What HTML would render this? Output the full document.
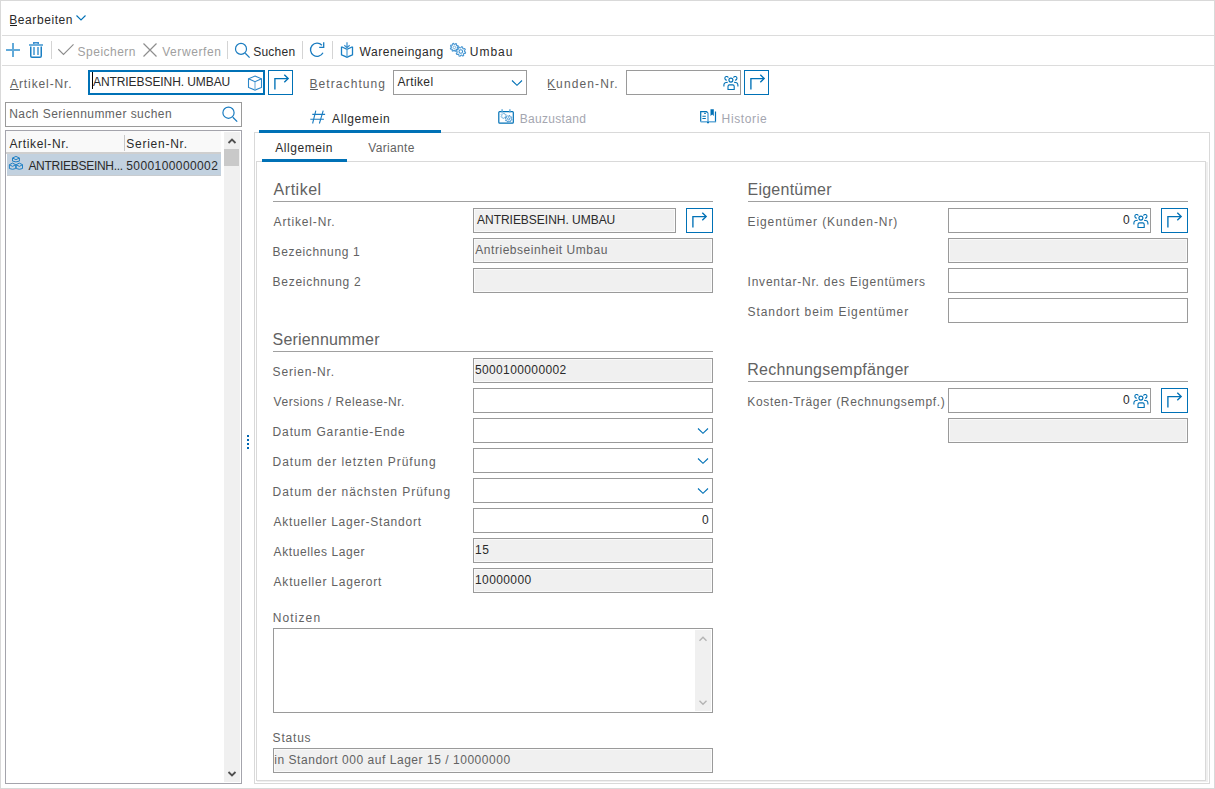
<!DOCTYPE html>
<html><head><meta charset="utf-8"><style>
html,body{margin:0;padding:0;background:#fff;width:1215px;height:789px;overflow:hidden;position:relative}
.t{position:absolute;white-space:nowrap;font-family:"Liberation Sans",sans-serif;}
u{text-decoration:underline;text-underline-offset:2px;text-decoration-thickness:1px}
svg{overflow:visible}
</style></head><body>
<div style="position:absolute;left:0px;top:0px;width:1215px;height:789px;box-sizing:border-box;border:1px solid #d9d9d9"></div>
<div style="position:absolute;left:10px;top:25px;width:7px;height:1px;box-sizing:border-box;background:#1e1e1e"></div>
<div style="position:absolute;left:10px;top:89px;width:9px;height:1px;box-sizing:border-box;background:#5e5e5e"></div>
<div style="position:absolute;left:310px;top:89px;width:8px;height:1px;box-sizing:border-box;background:#5e5e5e"></div>
<div style="position:absolute;left:548px;top:89px;width:8px;height:1px;box-sizing:border-box;background:#5e5e5e"></div>
<div style="position:absolute;left:2px;top:35px;width:1212px;height:1px;box-sizing:border-box;background:#dcdcdc"></div>
<div style="position:absolute;left:2px;top:65px;width:1212px;height:1px;box-sizing:border-box;background:#dcdcdc"></div>
<div style="position:absolute;left:51px;top:41px;width:1px;height:18px;box-sizing:border-box;background:#d4d4d4"></div>
<div style="position:absolute;left:227px;top:41px;width:1px;height:18px;box-sizing:border-box;background:#d4d4d4"></div>
<div style="position:absolute;left:302px;top:41px;width:1px;height:18px;box-sizing:border-box;background:#d4d4d4"></div>
<div style="position:absolute;left:332px;top:41px;width:1px;height:18px;box-sizing:border-box;background:#d4d4d4"></div>
<div style="position:absolute;left:88px;top:70px;width:177px;height:25px;box-sizing:border-box;border:2px solid #0071b6;background:#fff"></div>
<div style="position:absolute;left:92px;top:72px;width:1px;height:17px;box-sizing:border-box;background:#000"></div>
<div style="position:absolute;left:268px;top:70px;width:25px;height:25px;box-sizing:border-box;border:1px solid #0071b6"></div>
<div style="position:absolute;left:393px;top:70px;width:134px;height:25px;box-sizing:border-box;border:1px solid #9a9a9a"></div>
<div style="position:absolute;left:626px;top:70px;width:115px;height:25px;box-sizing:border-box;border:1px solid #9a9a9a"></div>
<div style="position:absolute;left:744px;top:70px;width:25px;height:25px;box-sizing:border-box;border:1px solid #0071b6"></div>
<div style="position:absolute;left:5px;top:102px;width:237px;height:25px;box-sizing:border-box;border:1px solid #9a9a9a"></div>
<div style="position:absolute;left:5px;top:130px;width:237px;height:654px;box-sizing:border-box;border:1px solid #a4a4ac"></div>
<div style="position:absolute;left:6px;top:131px;width:215px;height:21px;box-sizing:border-box;background:#f9f9f9"></div>
<div style="position:absolute;left:124px;top:135px;width:1px;height:16px;box-sizing:border-box;background:#c8c8c8"></div>
<div style="position:absolute;left:6px;top:152px;width:215px;height:2px;box-sizing:border-box;background:#cfcfcf"></div>
<div style="position:absolute;left:7px;top:154px;width:214px;height:21px;box-sizing:border-box;background:#c2d1df"></div>
<div style="position:absolute;left:7px;top:175px;width:214px;height:1px;box-sizing:border-box;background:#c8ccd0"></div>
<div style="position:absolute;left:224px;top:132px;width:16px;height:650px;box-sizing:border-box;background:#f0f0f0"></div>
<div style="position:absolute;left:224px;top:149px;width:15px;height:17px;box-sizing:border-box;background:#c9c9c9"></div>
<div style="position:absolute;left:247px;top:435px;width:2px;height:2px;box-sizing:border-box;background:#0066b3"></div>
<div style="position:absolute;left:247px;top:439px;width:2px;height:2px;box-sizing:border-box;background:#0066b3"></div>
<div style="position:absolute;left:247px;top:443px;width:2px;height:2px;box-sizing:border-box;background:#0066b3"></div>
<div style="position:absolute;left:247px;top:447px;width:2px;height:2px;box-sizing:border-box;background:#0066b3"></div>
<div style="position:absolute;left:254px;top:132px;width:956px;height:652px;box-sizing:border-box;border:1px solid #d9d9d9"></div>
<div style="position:absolute;left:259px;top:130px;width:182px;height:3px;box-sizing:border-box;background:#0071b6"></div>
<div style="position:absolute;left:256px;top:161px;width:950px;height:620px;box-sizing:border-box;border:1px solid #d9d9d9;background:#fff"></div>
<div style="position:absolute;left:1206px;top:162px;width:2px;height:620px;box-sizing:border-box;background:#efefef"></div>
<div style="position:absolute;left:257px;top:781px;width:951px;height:1px;box-sizing:border-box;background:#efefef"></div>
<div style="position:absolute;left:262px;top:159px;width:85px;height:3px;box-sizing:border-box;background:#0071b6"></div>
<div style="position:absolute;left:273px;top:201px;width:440px;height:1px;box-sizing:border-box;background:#a0a0a0"></div>
<div style="position:absolute;left:273px;top:351px;width:440px;height:1px;box-sizing:border-box;background:#a0a0a0"></div>
<div style="position:absolute;left:748px;top:201px;width:440px;height:1px;box-sizing:border-box;background:#a0a0a0"></div>
<div style="position:absolute;left:748px;top:381px;width:440px;height:1px;box-sizing:border-box;background:#a0a0a0"></div>
<div style="position:absolute;left:473px;top:208px;width:203px;height:25px;box-sizing:border-box;border:1px solid #9a9a9a;background:#f0f0f0;box-shadow:inset 0 0 0 1px #fafafa"></div>
<div style="position:absolute;left:686px;top:208px;width:27px;height:25px;box-sizing:border-box;border:1px solid #0071b6"></div>
<div style="position:absolute;left:473px;top:238px;width:240px;height:25px;box-sizing:border-box;border:1px solid #9a9a9a;background:#f0f0f0;box-shadow:inset 0 0 0 1px #fafafa"></div>
<div style="position:absolute;left:473px;top:268px;width:240px;height:25px;box-sizing:border-box;border:1px solid #9a9a9a;background:#f0f0f0;box-shadow:inset 0 0 0 1px #fafafa"></div>
<div style="position:absolute;left:473px;top:358px;width:240px;height:25px;box-sizing:border-box;border:1px solid #9a9a9a;background:#f0f0f0;box-shadow:inset 0 0 0 1px #fafafa"></div>
<div style="position:absolute;left:473px;top:388px;width:240px;height:25px;box-sizing:border-box;border:1px solid #9a9a9a;background:#fff"></div>
<div style="position:absolute;left:473px;top:418px;width:240px;height:25px;box-sizing:border-box;border:1px solid #9a9a9a;background:#fff"></div>
<div style="position:absolute;left:473px;top:448px;width:240px;height:25px;box-sizing:border-box;border:1px solid #9a9a9a;background:#fff"></div>
<div style="position:absolute;left:473px;top:478px;width:240px;height:25px;box-sizing:border-box;border:1px solid #9a9a9a;background:#fff"></div>
<div style="position:absolute;left:473px;top:508px;width:240px;height:25px;box-sizing:border-box;border:1px solid #9a9a9a;background:#fff"></div>
<div style="position:absolute;left:473px;top:538px;width:240px;height:25px;box-sizing:border-box;border:1px solid #9a9a9a;background:#f0f0f0;box-shadow:inset 0 0 0 1px #fafafa"></div>
<div style="position:absolute;left:473px;top:568px;width:240px;height:25px;box-sizing:border-box;border:1px solid #9a9a9a;background:#f0f0f0;box-shadow:inset 0 0 0 1px #fafafa"></div>
<div style="position:absolute;left:273px;top:628px;width:440px;height:85px;box-sizing:border-box;border:1px solid #9a9a9a"></div>
<div style="position:absolute;left:695px;top:630px;width:16px;height:81px;box-sizing:border-box;background:#f0f0f0"></div>
<div style="position:absolute;left:273px;top:748px;width:440px;height:25px;box-sizing:border-box;border:1px solid #9a9a9a;background:#f0f0f0;box-shadow:inset 0 0 0 1px #fafafa"></div>
<div style="position:absolute;left:948px;top:208px;width:203px;height:25px;box-sizing:border-box;border:1px solid #9a9a9a;background:#fff"></div>
<div style="position:absolute;left:1161px;top:208px;width:27px;height:25px;box-sizing:border-box;border:1px solid #0071b6"></div>
<div style="position:absolute;left:948px;top:238px;width:240px;height:25px;box-sizing:border-box;border:1px solid #9a9a9a;background:#f0f0f0;box-shadow:inset 0 0 0 1px #fafafa"></div>
<div style="position:absolute;left:948px;top:268px;width:240px;height:25px;box-sizing:border-box;border:1px solid #9a9a9a;background:#fff"></div>
<div style="position:absolute;left:948px;top:298px;width:240px;height:25px;box-sizing:border-box;border:1px solid #9a9a9a;background:#fff"></div>
<div style="position:absolute;left:948px;top:388px;width:203px;height:25px;box-sizing:border-box;border:1px solid #9a9a9a;background:#fff"></div>
<div style="position:absolute;left:1161px;top:388px;width:27px;height:25px;box-sizing:border-box;border:1px solid #0071b6"></div>
<div style="position:absolute;left:948px;top:418px;width:240px;height:25px;box-sizing:border-box;border:1px solid #9a9a9a;background:#f0f0f0;box-shadow:inset 0 0 0 1px #fafafa"></div>
<svg style="position:absolute;left:74px;top:12px" width="14" height="10" viewBox="0 0 14 10" fill="none"><path d="M2.5 3.5 L7 8 L11.5 3.5" stroke="#0071b6" stroke-width="1.1"/></svg>
<svg style="position:absolute;left:0px;top:40px" width="25" height="20" viewBox="0 0 25 20" fill="none"><path d="M12.999 3 V17 M6 10 H20" stroke="#62aad9" stroke-width="2"/></svg>
<svg style="position:absolute;left:27px;top:40px" width="18" height="20" viewBox="0 0 18 20" fill="none"><path d="M2 5 H16" stroke="#6fb0dc" stroke-width="2"/><path d="M6.75 4 V2.75 H11.25 V4" stroke="#3b8fcf" stroke-width="1.5"/><path d="M3.75 6.5 V16 Q3.75 17.25 5 17.25 H13 Q14.25 17.25 14.25 16 V6.5" stroke="#1a7fc3" stroke-width="1.5"/><path d="M7 7 V15 M11 7 V15" stroke="#6fb0dc" stroke-width="2"/></svg>
<svg style="position:absolute;left:56px;top:42px" width="20" height="16" viewBox="0 0 20 16" fill="none"><path d="M2.3 7.25 L7.5 12.4 L17.5 2.3" stroke="#8c8c8c" stroke-width="1.1"/></svg>
<svg style="position:absolute;left:141px;top:41px" width="18" height="18" viewBox="0 0 18 18" fill="none"><path d="M2.5 2.5 L15.5 15.5 M15.5 2.5 L2.5 15.5" stroke="#8e8e8e" stroke-width="1.2"/></svg>
<svg style="position:absolute;left:232px;top:40px" width="22" height="20" viewBox="0 0 22 20" fill="none"><circle cx="9" cy="8.9" r="5.5" stroke="#1a7cc0" stroke-width="1.2"/><path d="M13.3 13.3 L17.6 17.6" stroke="#1a7cc0" stroke-width="1.3"/></svg>
<svg style="position:absolute;left:306px;top:40px" width="22" height="20" viewBox="0 0 22 20" fill="none"><path d="M16.98 12.79 A6.6 6.6 0 1 1 15.9 5.2" stroke="#1a7cc0" stroke-width="1.3"/><path d="M17.7 2.3 V7.3 H13.2" stroke="#1a7cc0" stroke-width="1.3"/></svg>
<svg style="position:absolute;left:338px;top:40px" width="20" height="20" viewBox="0 0 20 20" fill="none"><path d="M9 2.3 V7.3 M6.3 5.3 L9 7.6 L11.7 5.3" stroke="#3b90cf" stroke-width="1.2"/><path d="M3.5 6.8 V14.8 L9 17.2 L14.5 14.8 V6.8" stroke="#1a7fc3" stroke-width="1.3"/><path d="M3.5 6.8 L9 9.4 L14.5 6.8" stroke="#1a7fc3" stroke-width="1.2"/><path d="M9 9.4 V17" stroke="#5aa5d8" stroke-width="1.3"/></svg>
<svg style="position:absolute;left:447px;top:40px" width="22" height="20" viewBox="0 0 22 20" fill="none"><path d="M10.29 7.95 L11.21 8.72 L10.75 9.64 L9.58 9.36 L9.01 9.85 L9.11 11.05 L8.14 11.37 L7.50 10.35 L6.75 10.29 L5.98 11.21 L5.06 10.75 L5.34 9.58 L4.85 9.01 L3.65 9.11 L3.33 8.14 L4.35 7.50 L4.41 6.75 L3.49 5.98 L3.95 5.06 L5.12 5.34 L5.69 4.85 L5.59 3.65 L6.56 3.33 L7.20 4.35 L7.95 4.41 L8.72 3.49 L9.64 3.95 L9.36 5.12 L9.85 5.69 L11.05 5.59 L11.37 6.56 L10.35 7.20 Z" stroke="#4796d2" stroke-width="1.05" stroke-linejoin="round"/><circle cx="7.35" cy="7.35" r="1.3" stroke="#7ab6e0" stroke-width="1"/><path d="M17.50 11.50 L18.65 12.19 L18.33 13.38 L16.98 13.38 L16.42 14.12 L16.74 15.42 L15.68 16.03 L14.72 15.08 L13.80 15.20 L13.11 16.35 L11.92 16.03 L11.92 14.68 L11.18 14.12 L9.88 14.44 L9.27 13.38 L10.22 12.42 L10.10 11.50 L8.95 10.81 L9.27 9.62 L10.62 9.62 L11.18 8.88 L10.86 7.58 L11.92 6.97 L12.88 7.92 L13.80 7.80 L14.49 6.65 L15.68 6.97 L15.68 8.32 L16.42 8.88 L17.72 8.56 L18.33 9.62 L17.38 10.58 Z" stroke="#4796d2" stroke-width="1.05" stroke-linejoin="round"/><circle cx="13.8" cy="11.5" r="1.8" stroke="#3b90cf" stroke-width="1.1"/></svg>
<svg style="position:absolute;left:248px;top:75px" width="16" height="18" viewBox="0 0 16 18" fill="none"><path d="M7 1.1 L13.5 3.8 V12.4 L7 15.1 L0.5 12.4 V3.8 Z" stroke="#2a86c8" stroke-width="1.1"/><path d="M0.5 3.8 L7 6.7 L13.5 3.8" stroke="#2a86c8" stroke-width="1.1"/><path d="M7 6.7 V15" stroke="#7ab6e0" stroke-width="1.2"/></svg>
<svg style="position:absolute;left:268px;top:70px" width="25" height="25" viewBox="0 0 25 25" fill="none"><path d="M6.9 19.5 V8.6 H20" stroke="#0071b6" stroke-width="1.35"/><path d="M16.3 4.7 L20.2 8.6 L16.3 12.3" stroke="#0071b6" stroke-width="1.35"/></svg>
<svg style="position:absolute;left:744px;top:70px" width="25" height="25" viewBox="0 0 25 25" fill="none"><path d="M6.9 19.5 V8.6 H20" stroke="#0071b6" stroke-width="1.35"/><path d="M16.3 4.7 L20.2 8.6 L16.3 12.3" stroke="#0071b6" stroke-width="1.35"/></svg>
<svg style="position:absolute;left:686px;top:208px" width="25" height="25" viewBox="0 0 25 25" fill="none"><path d="M6.9 19.5 V8.6 H20" stroke="#0071b6" stroke-width="1.35"/><path d="M16.3 4.7 L20.2 8.6 L16.3 12.3" stroke="#0071b6" stroke-width="1.35"/></svg>
<svg style="position:absolute;left:1161px;top:208px" width="25" height="25" viewBox="0 0 25 25" fill="none"><path d="M6.9 19.5 V8.6 H20" stroke="#0071b6" stroke-width="1.35"/><path d="M16.3 4.7 L20.2 8.6 L16.3 12.3" stroke="#0071b6" stroke-width="1.35"/></svg>
<svg style="position:absolute;left:1161px;top:388px" width="25" height="25" viewBox="0 0 25 25" fill="none"><path d="M6.9 19.5 V8.6 H20" stroke="#0071b6" stroke-width="1.35"/><path d="M16.3 4.7 L20.2 8.6 L16.3 12.3" stroke="#0071b6" stroke-width="1.35"/></svg>
<svg style="position:absolute;left:722px;top:74px" width="18" height="18" viewBox="0 0 18 18" fill="none"><circle cx="8.9" cy="6.1" r="2" stroke="#0071b6" stroke-width="1.1"/><path d="M6 15.5 V12.4 Q6 10.9 7.5 10.9 H10.7 Q12.2 10.9 12.2 12.4 V15.5 Z" stroke="#0071b6" stroke-width="1.1"/><path d="M6.3 3.6 A1.8 1.8 0 1 0 4.8 6.1 M11.5 3.6 A1.8 1.8 0 1 1 13.0 6.1" stroke="#0071b6" stroke-width="1.1"/><path d="M5.8 8.2 Q1.9 8.2 1.9 11 V12.4 M12 8.2 Q15.9 8.2 15.9 11 V12.4" stroke="#0071b6" stroke-width="1.1"/></svg>
<svg style="position:absolute;left:1132px;top:212px" width="18" height="18" viewBox="0 0 18 18" fill="none"><circle cx="8.9" cy="6.1" r="2" stroke="#0071b6" stroke-width="1.1"/><path d="M6 15.5 V12.4 Q6 10.9 7.5 10.9 H10.7 Q12.2 10.9 12.2 12.4 V15.5 Z" stroke="#0071b6" stroke-width="1.1"/><path d="M6.3 3.6 A1.8 1.8 0 1 0 4.8 6.1 M11.5 3.6 A1.8 1.8 0 1 1 13.0 6.1" stroke="#0071b6" stroke-width="1.1"/><path d="M5.8 8.2 Q1.9 8.2 1.9 11 V12.4 M12 8.2 Q15.9 8.2 15.9 11 V12.4" stroke="#0071b6" stroke-width="1.1"/></svg>
<svg style="position:absolute;left:1132px;top:392px" width="18" height="18" viewBox="0 0 18 18" fill="none"><circle cx="8.9" cy="6.1" r="2" stroke="#0071b6" stroke-width="1.1"/><path d="M6 15.5 V12.4 Q6 10.9 7.5 10.9 H10.7 Q12.2 10.9 12.2 12.4 V15.5 Z" stroke="#0071b6" stroke-width="1.1"/><path d="M6.3 3.6 A1.8 1.8 0 1 0 4.8 6.1 M11.5 3.6 A1.8 1.8 0 1 1 13.0 6.1" stroke="#0071b6" stroke-width="1.1"/><path d="M5.8 8.2 Q1.9 8.2 1.9 11 V12.4 M12 8.2 Q15.9 8.2 15.9 11 V12.4" stroke="#0071b6" stroke-width="1.1"/></svg>
<svg style="position:absolute;left:511px;top:79px" width="12" height="8" viewBox="0 0 12 8" fill="none"><path d="M1 1.5 L6 6.3 L11 1.5" stroke="#0071b6" stroke-width="1.1"/></svg>
<svg style="position:absolute;left:697px;top:427px" width="12" height="8" viewBox="0 0 12 8" fill="none"><path d="M1 1.5 L6 6.3 L11 1.5" stroke="#0071b6" stroke-width="1.1"/></svg>
<svg style="position:absolute;left:697px;top:457px" width="12" height="8" viewBox="0 0 12 8" fill="none"><path d="M1 1.5 L6 6.3 L11 1.5" stroke="#0071b6" stroke-width="1.1"/></svg>
<svg style="position:absolute;left:697px;top:487px" width="12" height="8" viewBox="0 0 12 8" fill="none"><path d="M1 1.5 L6 6.3 L11 1.5" stroke="#0071b6" stroke-width="1.1"/></svg>
<svg style="position:absolute;left:219px;top:104px" width="22" height="20" viewBox="0 0 22 20" fill="none"><circle cx="9.5" cy="8.7" r="5.6" stroke="#1a7cc0" stroke-width="1.2"/><path d="M13.8 13.2 L18.2 17.6" stroke="#1a7cc0" stroke-width="1.3"/></svg>
<svg style="position:absolute;left:6px;top:152px" width="22" height="22" viewBox="0 0 22 22" fill="none"><path d="M6.50 6.00 L9.95 4.40 L13.40 6.00 V9.10 L9.95 9.90 L6.50 9.10 Z M6.50 6.00 L9.95 7.70 L13.40 6.00" stroke="#1f80c4" stroke-width="1.0" stroke-linejoin="round"/><path d="M3.40 12.70 L6.55 11.10 L9.70 12.70 V16.50 L6.55 17.30 L3.40 16.50 Z M3.40 12.70 L6.55 14.40 L9.70 12.70 M10.20 12.70 L13.35 11.10 L16.50 12.70 V16.50 L13.35 17.30 L10.20 16.50 Z M10.20 12.70 L13.35 14.40 L16.50 12.70" stroke="#1f80c4" stroke-width="1.0" stroke-linejoin="round"/></svg>
<svg style="position:absolute;left:224px;top:134px" width="16" height="14" viewBox="0 0 16 14" fill="none"><path d="M4.5 9 L8 5.5 L11.5 9" stroke="#505050" stroke-width="1.8"/></svg>
<svg style="position:absolute;left:224px;top:767px" width="16" height="14" viewBox="0 0 16 14" fill="none"><path d="M4.5 5 L8 8.5 L11.5 5" stroke="#505050" stroke-width="1.8"/></svg>
<svg style="position:absolute;left:695px;top:632px" width="16" height="14" viewBox="0 0 16 14" fill="none"><path d="M4.5 8.8 L8 5.3 L11.5 8.8" stroke="#b4b4b4" stroke-width="1.4"/></svg>
<svg style="position:absolute;left:695px;top:696px" width="16" height="14" viewBox="0 0 16 14" fill="none"><path d="M4.5 4.7 L8 8.2 L11.5 4.7" stroke="#b4b4b4" stroke-width="1.4"/></svg>
<svg style="position:absolute;left:309px;top:108px" width="20" height="18" viewBox="0 0 20 18" fill="none"><path d="M6.8 2.7 L3.6 15.5 M14.2 2.7 L10.4 15.5 M3.3 6.4 H16.1 M1.3 11.3 H14.9" stroke="#1a7cc0" stroke-width="1.1"/></svg>
<svg style="position:absolute;left:496px;top:107px" width="20" height="19" viewBox="0 0 20 19" fill="none"><rect x="2.8" y="4.7" width="14.5" height="11.4" rx="0.9" stroke="#0071b6" stroke-width="1.2"/><path d="M6.1 2.2 V5.5 M13.9 2.2 V5.5" stroke="#5aa5d8" stroke-width="1.4"/><path d="M9.42 9.36 L9.98 10.07 L9.43 10.78 L8.61 10.41 L8.02 10.65 L7.69 11.50 L6.80 11.38 L6.71 10.48 L6.21 10.09 L5.31 10.23 L4.97 9.40 L5.70 8.87 L5.78 8.24 L5.22 7.53 L5.77 6.82 L6.59 7.19 L7.18 6.95 L7.51 6.10 L8.40 6.22 L8.49 7.12 L8.99 7.51 L9.89 7.37 L10.23 8.20 L9.50 8.73 Z" stroke="#7ab6e0" stroke-width="1" stroke-linejoin="round"/><path d="M15.10 11.80 L15.97 12.28 L15.74 13.10 L14.75 13.07 L14.37 13.57 L14.64 14.52 L13.90 14.94 L13.22 14.22 L12.60 14.30 L12.12 15.17 L11.30 14.94 L11.33 13.95 L10.83 13.57 L9.88 13.84 L9.46 13.10 L10.18 12.42 L10.10 11.80 L9.23 11.32 L9.46 10.50 L10.45 10.53 L10.83 10.03 L10.56 9.08 L11.30 8.66 L11.98 9.38 L12.60 9.30 L13.08 8.43 L13.90 8.66 L13.87 9.65 L14.37 10.03 L15.32 9.76 L15.74 10.50 L15.02 11.18 Z" stroke="#4796d2" stroke-width="1" stroke-linejoin="round"/><circle cx="12.6" cy="11.8" r="1.1" stroke="#4796d2" stroke-width="0.9"/></svg>
<svg style="position:absolute;left:696px;top:105px" width="24" height="22" viewBox="0 0 24 22" fill="none"><path d="M4.7 16.6 V6.7 H10.4 L11.9 7.8" stroke="#0071b6" stroke-width="1.2"/><path d="M12 7.8 V16.6" stroke="#6fb0dc" stroke-width="1.6"/><path d="M4.7 16.6 H19.5 V6.5" stroke="#0071b6" stroke-width="1.2"/><path d="M4.7 16.6 H19.5" stroke="#6fb0dc" stroke-width="1.2"/><path d="M14.5 4.2 H17.8 V11 L16.15 9.6 L14.5 11 Z" fill="#0071b6"/><path d="M8.2 8.4 H9.8 M6.4 11.3 H9.8 M6.4 13.5 H9.8" stroke="#0071b6" stroke-width="1.1"/><path d="M11 17.6 H13" stroke="#0071b6" stroke-width="1.5"/></svg>
<div class="t" style="left:9.30px;top:14px;font-size:12px;line-height:12px;letter-spacing:0.567px;color:#2a2a2a;">Bearbeiten</div>
<div class="t" style="left:77.60px;top:46px;font-size:12px;line-height:12px;letter-spacing:0.488px;color:#a0a0a0;">Speichern</div>
<div class="t" style="left:162.20px;top:46px;font-size:12px;line-height:12px;letter-spacing:0.575px;color:#a0a0a0;">Verwerfen</div>
<div class="t" style="left:253.20px;top:46px;font-size:12px;line-height:12px;letter-spacing:0.240px;color:#2a2a2a;">Suchen</div>
<div class="t" style="left:359.60px;top:46px;font-size:12px;line-height:12px;letter-spacing:0.545px;color:#2a2a2a;">Wareneingang</div>
<div class="t" style="left:469.70px;top:46px;font-size:12px;line-height:12px;letter-spacing:1.025px;color:#2a2a2a;">Umbau</div>
<div class="t" style="left:10.10px;top:78px;font-size:12px;line-height:12px;letter-spacing:0.890px;color:#626262;">Artikel-Nr.</div>
<div class="t" style="left:93.00px;top:76px;font-size:12px;line-height:12px;letter-spacing:-0.078px;color:#2a2a2a;">ANTRIEBSEINH. UMBAU</div>
<div class="t" style="left:309.50px;top:78px;font-size:12px;line-height:12px;letter-spacing:1.080px;color:#626262;">Betrachtung</div>
<div class="t" style="left:397.50px;top:76px;font-size:12px;line-height:12px;letter-spacing:0.367px;color:#2a2a2a;">Artikel</div>
<div class="t" style="left:547.00px;top:78px;font-size:12px;line-height:12px;letter-spacing:1.111px;color:#626262;">Kunden-Nr.</div>
<div class="t" style="left:9.20px;top:108px;font-size:12px;line-height:12px;letter-spacing:0.448px;color:#626262;">Nach Seriennummer suchen</div>
<div class="t" style="left:9.40px;top:138px;font-size:12px;line-height:12px;letter-spacing:0.650px;color:#2a2a2a;">Artikel-Nr.</div>
<div class="t" style="left:126.30px;top:138px;font-size:12px;line-height:12px;letter-spacing:0.744px;color:#2a2a2a;">Serien-Nr.</div>
<div class="t" style="left:28.40px;top:160px;font-size:12px;line-height:12px;letter-spacing:-0.279px;color:#2a2a2a;">ANTRIEBSEINH...</div>
<div class="t" style="left:126.30px;top:160px;font-size:12px;line-height:12px;letter-spacing:0.400px;color:#2a2a2a;">5000100000002</div>
<div class="t" style="left:332.10px;top:113px;font-size:12px;line-height:12px;letter-spacing:0.600px;color:#2a2a2a;">Allgemein</div>
<div class="t" style="left:519.80px;top:113px;font-size:12px;line-height:12px;letter-spacing:0.300px;color:#a4a6b0;">Bauzustand</div>
<div class="t" style="left:721.60px;top:113px;font-size:12px;line-height:12px;letter-spacing:0.629px;color:#a4a6b0;">Historie</div>
<div class="t" style="left:275.30px;top:142px;font-size:12px;line-height:12px;letter-spacing:0.550px;color:#2a2a2a;">Allgemein</div>
<div class="t" style="left:368.30px;top:142px;font-size:12px;line-height:12px;letter-spacing:0.314px;color:#626262;">Variante</div>
<div class="t" style="left:273.60px;top:182px;font-size:16px;line-height:16px;letter-spacing:0.517px;color:#626262;">Artikel</div>
<div class="t" style="left:273.60px;top:216px;font-size:12px;line-height:12px;letter-spacing:0.840px;color:#626262;">Artikel-Nr.</div>
<div class="t" style="left:272.60px;top:246px;font-size:12px;line-height:12px;letter-spacing:0.642px;color:#626262;">Bezeichnung 1</div>
<div class="t" style="left:272.60px;top:276px;font-size:12px;line-height:12px;letter-spacing:0.725px;color:#626262;">Bezeichnung 2</div>
<div class="t" style="left:477.00px;top:214px;font-size:12px;line-height:12px;letter-spacing:-0.022px;color:#2a2a2a;">ANTRIEBSEINH. UMBAU</div>
<div class="t" style="left:475.30px;top:244px;font-size:12px;line-height:12px;letter-spacing:0.535px;color:#626262;">Antriebseinheit Umbau</div>
<div class="t" style="left:272.60px;top:332px;font-size:16px;line-height:16px;letter-spacing:0.182px;color:#626262;">Seriennummer</div>
<div class="t" style="left:272.60px;top:366px;font-size:12px;line-height:12px;letter-spacing:0.822px;color:#626262;">Serien-Nr.</div>
<div class="t" style="left:273.60px;top:396px;font-size:12px;line-height:12px;letter-spacing:0.543px;color:#626262;">Versions / Release-Nr.</div>
<div class="t" style="left:272.60px;top:426px;font-size:12px;line-height:12px;letter-spacing:0.856px;color:#626262;">Datum Garantie-Ende</div>
<div class="t" style="left:272.60px;top:456px;font-size:12px;line-height:12px;letter-spacing:0.954px;color:#626262;">Datum der letzten Prüfung</div>
<div class="t" style="left:272.60px;top:486px;font-size:12px;line-height:12px;letter-spacing:0.964px;color:#626262;">Datum der nächsten Prüfung</div>
<div class="t" style="left:273.60px;top:516px;font-size:12px;line-height:12px;letter-spacing:0.752px;color:#626262;">Aktueller Lager-Standort</div>
<div class="t" style="left:273.60px;top:546px;font-size:12px;line-height:12px;letter-spacing:0.593px;color:#626262;">Aktuelles Lager</div>
<div class="t" style="left:273.60px;top:576px;font-size:12px;line-height:12px;letter-spacing:0.771px;color:#626262;">Aktueller Lagerort</div>
<div class="t" style="left:474.90px;top:364px;font-size:12px;line-height:12px;letter-spacing:0.383px;color:#2a2a2a;">5000100000002</div>
<div class="t" style="left:702.00px;top:514px;font-size:12px;line-height:12px;letter-spacing:0.000px;color:#2a2a2a;">0</div>
<div class="t" style="left:475.00px;top:544px;font-size:12px;line-height:12px;letter-spacing:0.500px;color:#2a2a2a;">15</div>
<div class="t" style="left:475.00px;top:574px;font-size:12px;line-height:12px;letter-spacing:0.400px;color:#2a2a2a;">10000000</div>
<div class="t" style="left:272.70px;top:612px;font-size:12px;line-height:12px;letter-spacing:1.117px;color:#626262;">Notizen</div>
<div class="t" style="left:272.60px;top:732px;font-size:12px;line-height:12px;letter-spacing:0.800px;color:#626262;">Status</div>
<div class="t" style="left:274.30px;top:754px;font-size:12px;line-height:12px;letter-spacing:0.534px;color:#626262;">in Standort 000 auf Lager 15 / 10000000</div>
<div class="t" style="left:747.50px;top:182px;font-size:16px;line-height:16px;letter-spacing:0.244px;color:#626262;">Eigentümer</div>
<div class="t" style="left:747.50px;top:216px;font-size:12px;line-height:12px;letter-spacing:0.910px;color:#626262;">Eigentümer (Kunden-Nr)</div>
<div class="t" style="left:1123.00px;top:214px;font-size:12px;line-height:12px;letter-spacing:0.000px;color:#2a2a2a;">0</div>
<div class="t" style="left:747.50px;top:276px;font-size:12px;line-height:12px;letter-spacing:0.796px;color:#626262;">Inventar-Nr. des Eigentümers</div>
<div class="t" style="left:747.50px;top:306px;font-size:12px;line-height:12px;letter-spacing:0.926px;color:#626262;">Standort beim Eigentümer</div>
<div class="t" style="left:747.30px;top:362px;font-size:16px;line-height:16px;letter-spacing:0.247px;color:#626262;">Rechnungsempfänger</div>
<div class="t" style="left:747.30px;top:396px;font-size:12px;line-height:12px;letter-spacing:0.662px;color:#626262;">Kosten-Träger (Rechnungsempf.)</div>
<div class="t" style="left:1123.00px;top:394px;font-size:12px;line-height:12px;letter-spacing:0.000px;color:#2a2a2a;">0</div>
</body></html>
